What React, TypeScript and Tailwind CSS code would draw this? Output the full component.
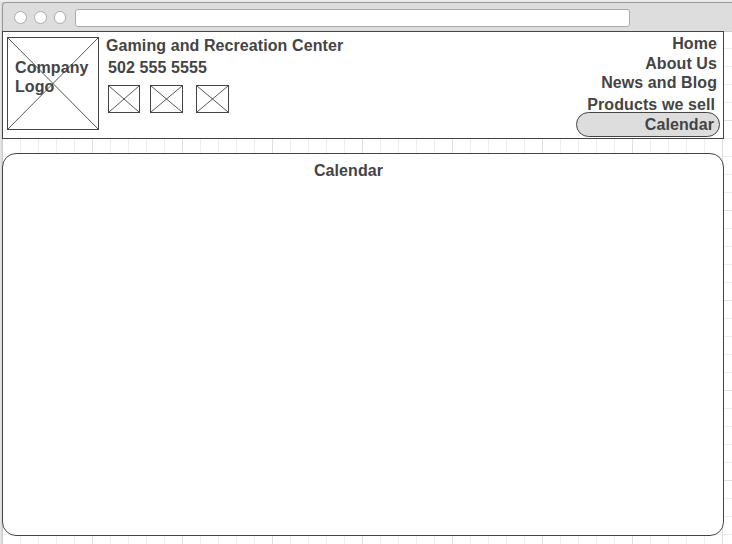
import React from "react";

type PlaceholderProps = { width: number; height: number; className?: string };

function Placeholder({ width, height, className = "" }: PlaceholderProps) {
  return (
    <svg width={width} height={height} className={`block shrink-0 ${className}`} fill="none">
      <rect x="0.5" y="0.5" width={width - 1} height={height - 1} stroke="#444444" />
      <path
        d={`M1 1L${width - 1} ${height - 1}M${width - 1} 1L1 ${height - 1}`}
        stroke="#444444"
        strokeWidth="0.9"
      />
    </svg>
  );
}

function BrowserBar() {
  return (
    <div className="flex h-[29px] items-start rounded-tl-[4px] border-t border-l border-[#999999] bg-[#dddddd] pl-[11px] pt-[6px]">
      <div className="flex gap-[7px] pt-[2px]">
        <span className="size-[13px] rounded-full border border-[#aaaaaa] bg-white" />
        <span className="size-[13px] rounded-full border border-[#aaaaaa] bg-white" />
        <span className="h-[13px] w-[12px] rounded-full border border-[#aaaaaa] bg-white" />
      </div>
      <div className="ml-[9px] h-[18px] w-[555px] rounded-[3px] border border-[#aaaaaa] bg-white" />
    </div>
  );
}

export default function App() {
  return (
    <div className="h-[544px] w-[732px] overflow-hidden bg-[linear-gradient(to_right,#ebebeb,#d4d4d4_2px)] font-['Liberation_Sans',Arial,sans-serif] text-[16px] leading-[19px] font-bold tracking-[0.09px] text-[#444444]">
      <div className="h-[2px] bg-[#ebebeb]" />
      <div className="pl-[2px]">
        <BrowserBar />
        <div className="h-[513px] bg-white bg-[linear-gradient(to_right,#cccccc_1px,transparent_1px),linear-gradient(to_right,#e0e0e0_1px,transparent_1px),linear-gradient(to_bottom,#e0e0e0_1px,transparent_1px),linear-gradient(to_right,#eeeeee_1px,transparent_1px),linear-gradient(to_bottom,#eeeeee_1px,transparent_1px)] bg-[size:730px_513px,90px_90px,90px_90px,18px_18px,18px_18px] bg-[position:0_0,0_-1px,0_-1px,0_-1px,0_-1px] shadow-[inset_0_1px_0_#cccccc]">
          <header className="flex h-[108px] w-[722px] justify-between border border-[#444444] bg-white">
            <div className="flex">
              <div className="mt-[5px] ml-[4px] grid h-[93px] w-[92px]">
                <Placeholder width={92} height={93} className="col-start-1 row-start-1" />
                <div className="col-start-1 row-start-1 pt-[21px] pl-[8px]">
                  Company
                  <br />
                  Logo
                </div>
              </div>
              <div className="ml-[7px] pt-[4px] whitespace-nowrap">
                <h1>Gaming and Recreation Center</h1>
                <p className="mt-[3px] pl-[2px]">502 555 5555</p>
                <div className="mt-[8px] flex pl-[2px]">
                  <Placeholder width={32} height={28} />
                  <Placeholder width={33} height={28} className="ml-[10px]" />
                  <Placeholder width={33} height={28} className="ml-[13px]" />
                </div>
              </div>
            </div>
            <nav className="flex w-[144px] flex-col pt-[2px] pr-[3px] text-right whitespace-nowrap">
              <a className="pr-[3px]">Home</a>
              <a className="mt-px pr-[3px]">About Us</a>
              <a className="pr-[3px]">News and Blog</a>
              <a className="mt-[3px] pr-[5px]">Products we sell</a>
              <a className="-mt-[2px] -ml-[3px] h-[25px] w-[144px] shrink-0 rounded-full border border-[#444444] bg-[#dddddd] pt-[2px] pr-[5px]">
                Calendar
              </a>
            </nav>
          </header>
          <main className="mt-[14px] h-[383px] w-[722px] rounded-[14px] border border-[#444444] bg-white pt-[7px] pr-[29px] text-center">
            <h2>Calendar</h2>
          </main>
        </div>
      </div>
    </div>
  );
}
